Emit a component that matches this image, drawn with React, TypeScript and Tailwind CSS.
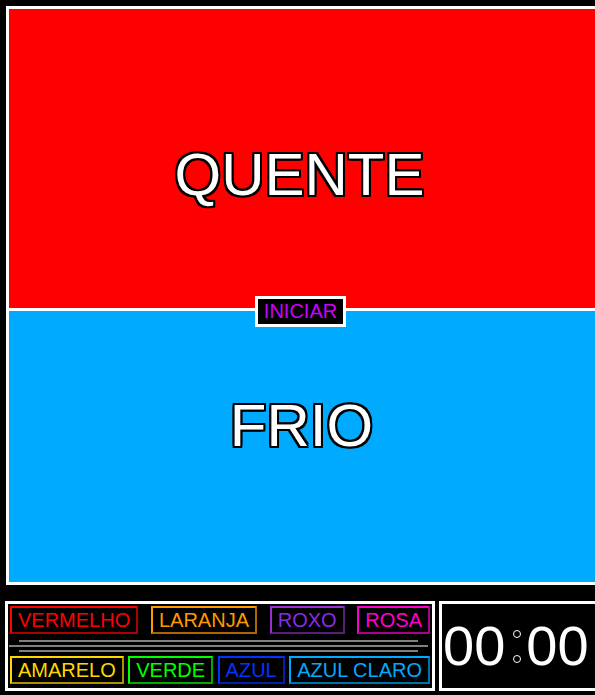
import React from 'react';

interface TagProps {
  label: string;
  color: string;
}

const TAGS_TOP: TagProps[] = [
  { label: 'VERMELHO', color: 'text-[#ff0000] border-[#ff0000]' },
  { label: 'LARANJA', color: 'text-[#ff9900] border-[#ff9900]' },
  { label: 'ROXO', color: 'text-[#8a2be2] border-[#9932cc]' },
  { label: 'ROSA', color: 'text-[#ff00cc] border-[#ff00cc]' },
];

const TAGS_BOTTOM: TagProps[] = [
  { label: 'AMARELO', color: 'text-[#ffd700] border-[#ffd700]' },
  { label: 'VERDE', color: 'text-[#00ff00] border-[#00ff00]' },
  { label: 'AZUL', color: 'text-[#0033ff] border-[#0033ff]' },
  { label: 'AZUL CLARO', color: 'text-[#00aaff] border-[#00aaff]' },
];

const outline =
  '[text-shadow:-2px_-2px_0_#000,2px_-2px_0_#000,-2px_2px_0_#000,2px_2px_0_#000,0_2px_0_#000,0_-2px_0_#000,2px_0_0_#000,-2px_0_0_#000]';

const Tag: React.FC<TagProps> = ({ label, color }) => (
  <div className={`h-[28px] flex items-center px-[6px] border-2 [border-style:outset] text-[20px] leading-none whitespace-nowrap ${color}`}>
    {label}
  </div>
);

const App: React.FC = () => {
  return (
    <div className="w-[595px] h-[695px] bg-black overflow-hidden font-['Liberation_Sans',Arial,sans-serif]">
      {/* Board */}
      <div className="pt-[6px] pl-[6px]">
        <div className="relative w-[600px] border-[3px] border-white">
          <div className="h-[299px] bg-[#ff0000] pt-[131px]">
            <div className={`w-[581px] flex justify-center text-[60px] leading-[69px] text-white ${outline}`}>QUENTE</div>
          </div>
          <div className="h-[3px] bg-white" />
          <div className="h-[271px] bg-[#00aaff] pt-[80px]">
            <div className={`w-[581px] pl-[4px] flex justify-center text-[60px] leading-[69px] text-white ${outline}`}>FRIO</div>
          </div>

          {/* Start button */}
          <button className="absolute left-[246px] top-[287px] w-[91px] h-[31px] border-[3px] border-white bg-black flex items-center justify-center pb-[1px] text-[20px] leading-none text-[#cc00ff]">
            INICIAR
          </button>
        </div>
      </div>

      {/* Bottom controls */}
      <div className="mt-[16px] pl-[5px] flex gap-[4px]">
        <div className="w-[430px] h-[90px] shrink-0 border-[3px] border-white px-[2px] pt-[2px] flex flex-col">
          <div className="flex justify-between">
            {TAGS_TOP.map((t) => (
              <Tag key={t.label} {...t} />
            ))}
          </div>
          <div className="mt-[6px] flex flex-col gap-[3px]">
            <div className="h-[2px] bg-[#808080] ml-[9px] mr-[12px]" />
            <div className="h-[2px] bg-[#808080] -ml-[1px] mr-[2px]" />
            <div className="h-[2px] bg-[#808080] ml-[9px] mr-[12px]" />
          </div>
          <div className="mt-[4px] flex justify-between">
            {TAGS_BOTTOM.map((t) => (
              <Tag key={t.label} {...t} />
            ))}
          </div>
        </div>

        {/* Timer */}
        <div className="w-[170px] h-[90px] shrink-0 border-[3px] border-white flex items-center pl-[1px] text-white text-[56px] leading-none">
          <span>00</span>
          <span className="flex flex-col gap-[17px] ml-[8px] mr-[5px]">
            <span className="block w-[8px] h-[8px] rounded-full border-[1.5px] border-white" />
            <span className="block w-[8px] h-[8px] rounded-full border-[1.5px] border-white" />
          </span>
          <span>00</span>
        </div>
      </div>
    </div>
  );
};

export default App;
